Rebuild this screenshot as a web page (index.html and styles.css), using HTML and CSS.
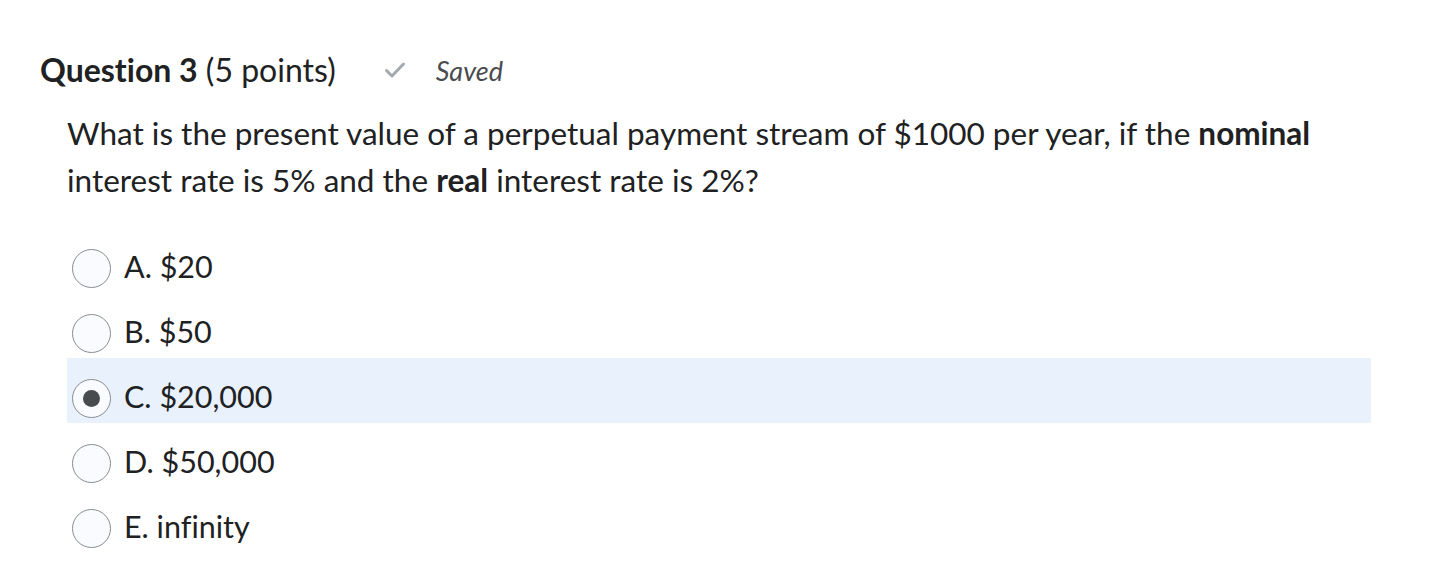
FILE: index.html
```html
<!DOCTYPE html>
<html>
<head>
<meta charset="utf-8">
<link rel="stylesheet" href="styles.css">
</head>
<body>
<div class="question">
  <div class="q-header">
    <h2 class="q-title"><strong>Question 3</strong> <span class="pts">(5 points)</span></h2>
    <div class="saved">
      <svg class="check" width="22" height="18" viewBox="0 0 22 18"><path d="M2.5 9.5 L8 15 L19.5 3" fill="none" stroke="#a4a9ad" stroke-width="3" stroke-linecap="round" stroke-linejoin="round"/></svg>
      <span>Saved</span>
    </div>
  </div>
  <p class="q-text">What is the present value of a perpetual payment stream of $1000 per year, if the <strong>nominal</strong> interest rate is 5% and the <strong>real</strong> interest rate is 2%?</p>
  <div class="options">
    <label class="option"><span class="radio"></span><span class="opt-label">A. $20</span></label>
    <label class="option"><span class="radio"></span><span class="opt-label">B. $50</span></label>
    <label class="option selected"><span class="radio checked"></span><span class="opt-label">C. $20,000</span></label>
    <label class="option"><span class="radio"></span><span class="opt-label">D. $50,000</span></label>
    <label class="option"><span class="radio"></span><span class="opt-label">E. infinity</span></label>
  </div>
</div>
</body>
</html>
```
FILE: styles.css
```css
html, body {
  margin: 0;
  padding: 0;
  background: #ffffff;
}
body {
  font-family: Lato, "Open Sans", sans-serif;
  color: #202122;
  font-variant-ligatures: none;
}
.question {
  padding: 48px 0 0 40px;
  width: 1331px;
}
.q-header {
  display: flex;
  align-items: center;
  gap: 48px;
  height: 44px;
}
.q-title {
  margin: 0;
  font-size: 32px;
  font-weight: 400;
  line-height: 44px;
}
.q-title strong {
  font-weight: 700;
}
.saved {
  display: flex;
  align-items: center;
  gap: 30px;
  font-style: italic;
  font-size: 27px;
  color: #494c4e;
}
.q-text {
  margin: 18px 0 0 27px;
  font-size: 31.5px;
  line-height: 47px;
}
.q-text strong {
  font-weight: 700;
}
.options {
  margin: 24px 0 0 27px;
  display: flex;
  flex-direction: column;
}
.option {
  box-sizing: border-box;
  display: flex;
  align-items: center;
  height: 65px;
  padding-top: 10px;
  gap: 13px;
  padding-left: 5px;
  font-size: 30.5px;
}
.option.selected {
  background: #e8f1fc;
}
.radio {
  width: 37px;
  height: 37px;
  margin-top: 5px;
  border: 1px solid #8a8d90;
  border-radius: 50%;
  background: #f9fbff;
  display: flex;
  align-items: center;
  justify-content: center;
  flex: none;
}
.radio.checked::after {
  content: "";
  width: 17px;
  height: 17px;
  border-radius: 50%;
  background: #494c4e;
}
```
